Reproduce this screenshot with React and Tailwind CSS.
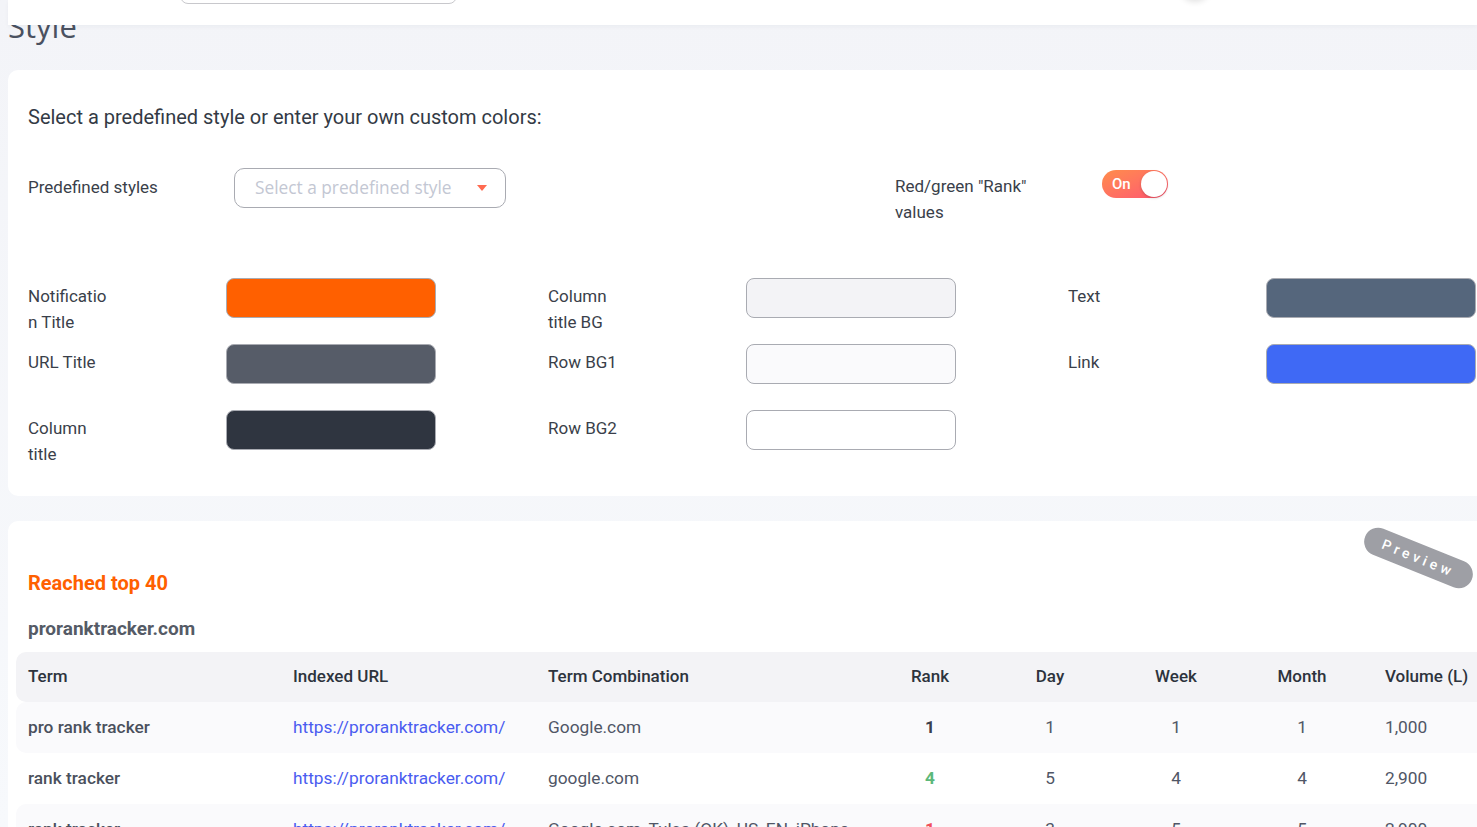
import React from "react";

const swatches = [
  [
    { label: "Notification Title", color: "bg-[#ff6000]" },
    { label: "Column title BG", color: "bg-[#f3f3f6]" },
    { label: "Text", color: "bg-[#55667c]" },
  ],
  [
    { label: "URL Title", color: "bg-[#565c68]" },
    { label: "Row BG1", color: "bg-[#fafafc]" },
    { label: "Link", color: "bg-[#3f69f5]" },
  ],
  [
    { label: "Column title", color: "bg-[#2f3540]" },
    { label: "Row BG2", color: "bg-white" },
    null,
  ],
];

const rows = [
  {
    term: "pro rank tracker",
    url: "https://proranktracker.com/",
    combo: "Google.com",
    rank: "1",
    rankColor: "text-[#3a404c]",
    day: "1",
    week: "1",
    month: "1",
    volume: "1,000",
    bg: "bg-[#fafafc]",
  },
  {
    term: "rank tracker",
    url: "https://proranktracker.com/",
    combo: "google.com",
    rank: "4",
    rankColor: "text-[#5cb87a]",
    day: "5",
    week: "4",
    month: "4",
    volume: "2,900",
    bg: "bg-white",
  },
  {
    term: "rank tracker",
    url: "https://proranktracker.com/",
    combo: "Google.com, Tulsa (OK), US, EN, iPhone",
    rank: "1",
    rankColor: "text-[#f0505a]",
    day: "3",
    week: "5",
    month: "5",
    volume: "2,900",
    bg: "bg-[#fafafc]",
  },
];

const cols = "grid grid-cols-[265px_255px_330px_128px_112px_140px_112px_150px]";

function Swatch({ item }) {
  if (!item) return <div className="w-[520px] shrink-0" />;
  return (
    <div className="flex w-[520px] shrink-0 h-[66px] items-start">
      <div className="w-[198px] shrink-0">
        <div className="w-[84px] pt-[5px] text-[17px] leading-[26px] text-[#3a3f4a] [overflow-wrap:anywhere]">
          {item.label}
        </div>
      </div>
      <div className={`w-[210px] shrink-0 h-[40px] rounded-lg border border-[#a9abb2] ${item.color}`} />
    </div>
  );
}

export default function App() {
  return (
    <div
      className="relative w-[1477px] h-[827px] overflow-hidden bg-gradient-to-b from-[#f3f4f8] to-[#f7f9fc] pl-2"
      style={{ fontFamily: "Roboto, 'Liberation Sans', sans-serif" }}
    >
      {/* Top bar (scrolled, overlapping the heading) */}
      <div className="absolute top-0 left-2 right-0 h-[25px] bg-white z-10 shadow-[0_2px_4px_rgba(30,40,80,0.04)]">
        <div className="absolute left-[172px] top-[-37px] w-[277px] h-[41px] rounded-lg border border-[#c8c8cc] bg-white" />
        <div className="absolute left-[1172px] top-[-30px] w-[30px] h-[30px] rounded-full bg-white shadow-[0_2px_6px_rgba(0,0,0,0.12)]" />
      </div>

      {/* Heading */}
      <h1
        className="pt-[6px] h-[70px] text-[31px] leading-[40px] text-[#4a5160]"
        style={{ fontFamily: "'Open Sans', sans-serif" }}
      >
        Style
      </h1>

      {/* Style settings card */}
      <div className="w-[1500px] rounded-[10px] bg-white pt-[33px] pb-[20px] pl-[20px]">
        <p className="text-[20px] leading-[28px] text-[#333a45]">
          Select a predefined style or enter your own custom colors:
        </p>

        <div className="mt-[37px] flex items-start h-[57px]">
          <div className="w-[206px] pt-[6px] text-[17px] leading-[26px] text-[#3a3f4a]">
            Predefined styles
          </div>
          <div className="flex w-[272px] h-[40px] items-center justify-between rounded-[10px] border border-[#a9abb2] pl-[20px] pr-[18px]">
            <span
              className="text-[17.3px] text-[#c3c7d3]"
              style={{ fontFamily: "'Open Sans', sans-serif" }}
            >
              Select a predefined style
            </span>
            <svg width="10" height="6" viewBox="0 0 10 6">
              <path d="M0 0 L10 0 L5 6 Z" fill="#ff6a50" />
            </svg>
          </div>
          <div className="ml-[389px] w-[207px] pt-[5px]">
            <div className="w-[150px] text-[17px] leading-[26px] text-[#3a3f4a]">
              Red/green "Rank" values
            </div>
          </div>
          <div className="mt-[2px] flex w-[66px] h-[28px] items-center justify-between rounded-full bg-gradient-to-br from-[#ff8c4a] to-[#ff5470] pl-[10px] pr-[1px]">
            <span className="text-[15px] font-medium text-white">On</span>
            <span className="w-[26px] h-[26px] rounded-full bg-white shadow-[0_1px_3px_rgba(0,0,0,0.2)]" />
          </div>
        </div>

        <div className="mt-[53px] flex flex-col">
          {swatches.map((row, i) => (
            <div key={i} className="flex">
              {row.map((item, j) => (
                <Swatch key={j} item={item} />
              ))}
            </div>
          ))}
        </div>
      </div>

      {/* Preview card */}
      <div className="relative mt-[25px] w-[1500px] rounded-[10px] bg-white pt-[48px] pl-[8px]">
        <div className="absolute left-[1353px] top-[23px] flex w-[115px] h-[28px] rotate-[22deg] items-center justify-center rounded-full bg-[#9e9fa5]">
          <span className="text-[14px] font-medium tracking-[4px] text-white">Preview</span>
        </div>

        <div className="pl-[12px] text-[20px] leading-[28px] font-bold text-[#ff6000]">
          Reached top 40
        </div>
        <div className="mt-[19px] pl-[12px] text-[19px] leading-[26px] font-bold text-[#555b66]">
          proranktracker.com
        </div>

        <div className="mt-[10px]">
          <div className={`${cols} h-[50px] items-center rounded-[10px] bg-[#f3f3f6] text-[17px] font-medium text-[#2d333d]`}>
            <div className="pl-3">Term</div>
            <div className="pl-3">Indexed URL</div>
            <div className="pl-3">Term Combination</div>
            <div className="text-center">Rank</div>
            <div className="text-center">Day</div>
            <div className="text-center">Week</div>
            <div className="text-center">Month</div>
            <div className="pl-[27px]">Volume (L)</div>
          </div>
          {rows.map((r, i) => (
            <div
              key={i}
              className={`${cols} h-[51px] items-center rounded-[10px] text-[17.3px] text-[#505666] ${r.bg}`}
            >
              <div className="pl-3 font-medium text-[#4a505c]">{r.term}</div>
              <div className="pl-3 text-[#4a5cf0]">{r.url}</div>
              <div className="pl-3 whitespace-nowrap">{r.combo}</div>
              <div className={`text-center font-bold ${r.rankColor}`}>{r.rank}</div>
              <div className="text-center">{r.day}</div>
              <div className="text-center">{r.week}</div>
              <div className="text-center">{r.month}</div>
              <div className="pl-[27px]">{r.volume}</div>
            </div>
          ))}
        </div>
      </div>
    </div>
  );
}
